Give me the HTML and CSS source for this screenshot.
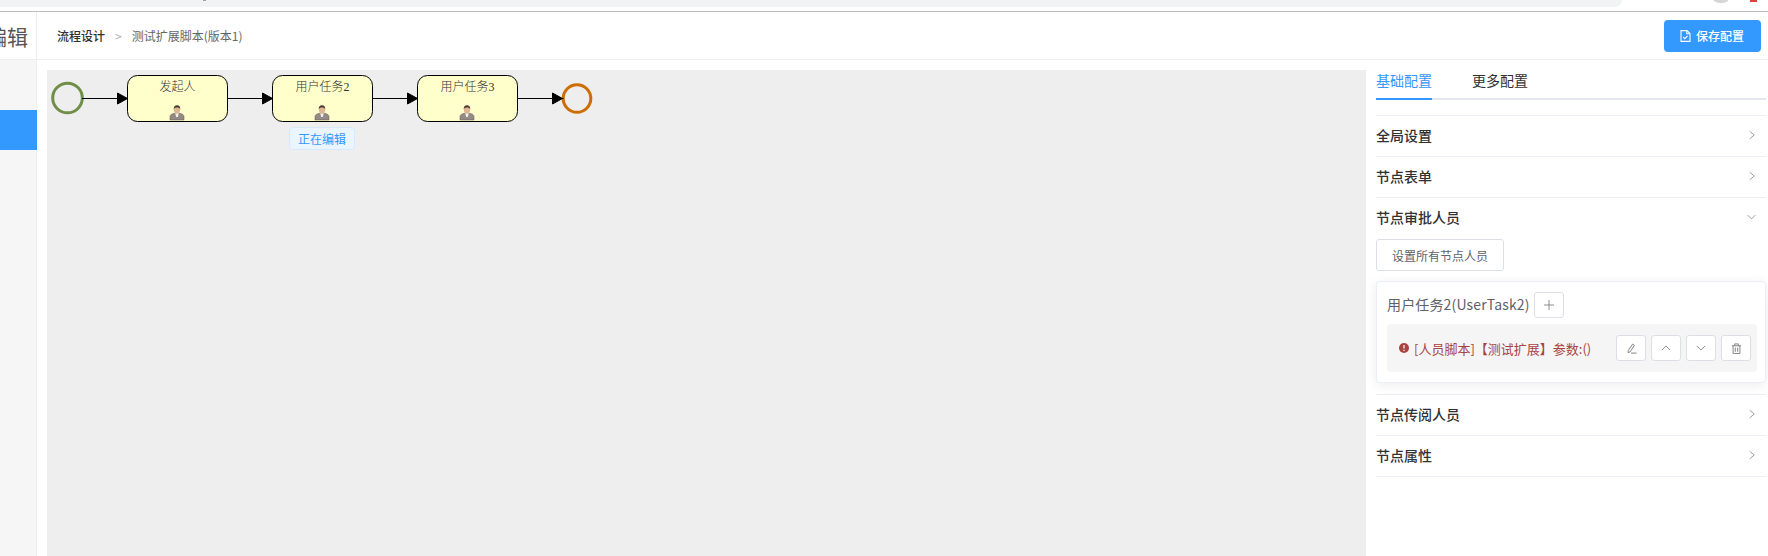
FILE: index.html
```html
<!DOCTYPE html>
<html lang="zh-CN">
<head>
<meta charset="utf-8">
<title>流程设计</title>
<link rel="stylesheet" href="styles.css">
</head>
<body>
<div class="chrome">
  <div class="address"></div>
  <span class="chrome-tick"></span>
  <span class="chrome-avatar"></span>
  <span class="chrome-dot"></span>
</div>
<div class="app">
  <aside class="sidebar">
    <div class="brand"><span class="brand-text">编辑</span></div>
    <div class="menu"><div class="menu-active"></div></div>
  </aside>
  <main class="main">
    <header class="topbar">
      <nav class="crumbs">
        <span class="crumb-root">流程设计</span>
        <span class="crumb-sep">&gt;</span>
        <span class="crumb-leaf">测试扩展脚本(版本1)</span>
      </nav>
      <button class="save-btn">
        <svg class="save-icon" viewBox="0 0 11 12" width="11" height="12" fill="none" stroke="#fff" stroke-width="1.1"><path d="M1 .6h6l3 3v7.8H1z"/><path d="M6.8.8v3h3"/><path d="M3.2 7l1.6 1.6L7.6 5.8"/></svg>
        <span>保存配置</span>
      </button>
    </header>
    <div class="content">
      <section class="canvas">
        <svg class="diagram" width="560" height="90" viewBox="0 0 560 90">
          <defs>
            <g id="person">
              <path d="M0 15v-3.4c0-1.8 1.6-2.6 4.6-3.4h4.8c3 .8 4.6 1.6 4.6 3.4V15z" fill="#948b86" stroke="#5f5650" stroke-width=".5"/>
              <path d="M5.2 8.2h3.6L7.8 12H6.2z" fill="#f4f1ea"/>
              <ellipse cx="7" cy="4.8" rx="3.1" ry="3.6" fill="#dfb592"/>
              <path d="M3.7 4.6C3.5 1.6 5 .2 7 .2s3.5 1.4 3.3 4.4C9.8 3 8.6 2.6 7 2.6s-2.8.4-3.3 2z" fill="#4b3a32"/>
            </g>
          </defs>
          <circle cx="20.5" cy="28" r="14.8" fill="none" stroke="#6f8f48" stroke-width="3"/>
          <circle cx="530" cy="28.5" r="13.8" fill="none" stroke="#cc6f00" stroke-width="3"/>
          <g stroke="#000" stroke-width="1" fill="#000">
            <path d="M35 28.5h45"/><path d="M70.500 23l10 5.500-10 5.500z"/>
            <path d="M180.500 28.500h45"/><path d="M215.500 23l10 5.500-10 5.500z"/>
            <path d="M325.500 28.500h45"/><path d="M360.500 23l10 5.500-10 5.500z"/>
            <path d="M470.500 28.500h46"/><path d="M505.500 23l10 5.500-10 5.500z"/>
          </g>
          <g fill="#ffffcc" stroke="#000" stroke-width="1">
            <rect x="80.500" y="5.500" width="100" height="46" rx="10"/>
            <rect x="225.500" y="5.500" width="100" height="46" rx="10"/>
            <rect x="370.500" y="5.500" width="100" height="46" rx="10"/>
          </g>
          <g class="node-label" text-anchor="middle">
            <text x="130.500" y="21">发起人</text>
            <text x="275.500" y="21">用户任务2</text>
            <text x="420.500" y="21">用户任务3</text>
          </g>
          <use href="#person" x="123" y="35"/>
          <use href="#person" x="268" y="35"/>
          <use href="#person" x="413" y="35"/>
        </svg>
        <span class="edit-badge">正在编辑</span>
      </section>
      <aside class="panel">
        <div class="tabs">
          <span class="tab tab-active">基础配置</span>
          <span class="tab">更多配置</span>
        </div>
        <div class="collapse">
          <div class="item">
            <div class="item-head"><span>全局设置</span><svg class="chev" viewBox="0 0 8 12" width="6" height="10"><path d="M1 1l6 5-6 5"/></svg></div>
          </div>
          <div class="item">
            <div class="item-head"><span>节点表单</span><svg class="chev" viewBox="0 0 8 12" width="6" height="10"><path d="M1 1l6 5-6 5"/></svg></div>
          </div>
          <div class="item">
            <div class="item-head"><span>节点审批人员</span><svg class="chev-down" viewBox="0 0 12 8" width="9" height="6"><path d="M1 1.500l5 5 5-5"/></svg></div>
            <div class="item-body">
              <button class="btn-all">设置所有节点人员</button>
              <div class="card">
                <div class="card-title">
                  <span class="card-name">用户任务2(UserTask2)</span>
                  <button class="icon-btn"><svg viewBox="0 0 12 12" width="10" height="10"><path d="M6 0v12M0 6h12"/></svg></button>
                </div>
                <div class="rule">
                  <div class="rule-text">
                    <svg class="alert" viewBox="0 0 10 10" width="10" height="10"><circle cx="5" cy="5" r="5" fill="#a94442"/><path d="M5 2v3.600M5 6.800v1.200" stroke="#fff" stroke-width="1.200"/></svg>
                    <span>[人员脚本]【测试扩展】参数:()</span>
                  </div>
                  <div class="rule-actions">
                    <button class="icon-btn"><svg viewBox="0 0 12 12" width="11" height="11"><path d="M2.500 8.200L7.200 1.200l2 1.300L4.600 9.600l-2.300.9zM5.500 11h6"/></svg></button>
                    <button class="icon-btn"><svg viewBox="0 0 12 12" width="10" height="10"><path d="M1 8.500l5-5 5 5"/></svg></button>
                    <button class="icon-btn"><svg viewBox="0 0 12 12" width="10" height="10"><path d="M1 3.500l5 5 5-5"/></svg></button>
                    <button class="icon-btn"><svg viewBox="0 0 12 12" width="11" height="11"><path d="M1 3h10M4 3V1h4v2M2.300 3v8.400h7.400V3M4.700 5v4.600M7.300 5v4.600"/></svg></button>
                  </div>
                </div>
              </div>
            </div>
          </div>
          <div class="item">
            <div class="item-head"><span>节点传阅人员</span><svg class="chev" viewBox="0 0 8 12" width="6" height="10"><path d="M1 1l6 5-6 5"/></svg></div>
          </div>
          <div class="item">
            <div class="item-head"><span>节点属性</span><svg class="chev" viewBox="0 0 8 12" width="6" height="10"><path d="M1 1l6 5-6 5"/></svg></div>
          </div>
        </div>
      </aside>
    </div>
  </main>
</div>
</body>
</html>
```
FILE: styles.css
```css
* { box-sizing: border-box; }
html, body { height: 100%; }
body {
  margin: 0;
  overflow: hidden;
  display: flex;
  flex-direction: column;
  background: #fff;
  color: #303133;
  font-family: "Noto Sans CJK SC", "Noto Sans", sans-serif;
  font-size: 14px;
}
button { font-family: inherit; cursor: pointer; }

.chrome {
  position: relative;
  flex: none;
  height: 12px;
  border-bottom: 1px solid #bdbdbd;
}
.address {
  width: 1622px;
  height: 7px;
  background: #f1f3f4;
  border-bottom-right-radius: 8px;
}
.chrome-tick { position: absolute; left: 203px; top: 0; width: 3px; height: 1px; background: #9aa0a6; }
.chrome-avatar { position: absolute; left: 1713px; top: -6px; width: 16px; height: 9px; border-radius: 50%; background: #d5d5d5; }
.chrome-dot { position: absolute; left: 1750px; top: 0; width: 7px; height: 2px; background: #d9453c; }

.app { flex: 1; display: flex; min-height: 0; }

.sidebar {
  flex: none;
  width: 37px;
  display: flex;
  flex-direction: column;
  overflow: hidden;
}
.brand {
  flex: none;
  height: 48px;
  display: flex;
  justify-content: flex-end;
  align-items: center;
  padding: 1px 8px 0 0;
  border-right: 1px solid #eeeeee;
  border-bottom: 1px solid #eeeeee;
  overflow: hidden;
}
.brand-text { flex: none; font-size: 21px; color: #555; white-space: nowrap; }
.menu { flex: 1; background: #f6f6f6; padding-top: 50px; border-right: 1px solid #eeeeee; }
.menu-active { height: 40px; margin-right: -1px; background: #3399ff; }

.main { flex: 1; min-width: 0; display: flex; flex-direction: column; }

.topbar {
  flex: none;
  height: 48px;
  display: flex;
  align-items: center;
  justify-content: space-between;
  padding: 0 7px 0 20px;
  border-bottom: 1px solid #eeeeee;
}
.crumbs { display: flex; align-items: center; font-size: 12px; }
.crumb-root { font-weight: 500; color: #303133; }
.crumb-sep { margin: 0 10px; color: #b4b4b4; }
.crumb-leaf { color: #666; }

.save-btn {
  display: flex;
  align-items: center;
  gap: 5px;
  width: 97px;
  height: 32px;
  padding: 0 0 0 16px;
  border: 0;
  border-radius: 4px;
  background: #3399ff;
  color: #fff;
  font-size: 12px;
  font-weight: 500;
}
.save-icon { flex: none; }

.content { flex: 1; min-height: 0; display: flex; padding: 10px 2px 0 10px; gap: 10px; }

.canvas { position: relative; flex: 1; min-width: 0; background: #eeeeee; overflow: hidden; }
.diagram { position: absolute; left: 0; top: 0; display: block; }
.node-label { font-size: 12px; fill: #333; font-weight: 300; font-family: "Liberation Serif", "Noto Sans CJK SC", serif; }
.edit-badge {
  position: absolute;
  left: 242px;
  top: 57px;
  width: 66px;
  height: 23px;
  display: flex;
  align-items: center;
  justify-content: center;
  border: 1px solid #d6eaff;
  border-radius: 4px;
  background: #ebf5ff;
  color: #3399ff;
  font-size: 12px;
}

.panel { flex: none; width: 390px; }

.tabs { display: flex; gap: 40px; height: 30px; border-bottom: 2px solid #e4e7ed; margin-bottom: 15px; }
.tab { position: relative; font-size: 14px; line-height: 20px; color: #303133; }
.tab-active { color: #3399ff; }
.tab-active::after { content: ""; position: absolute; left: 0; right: 0; bottom: -2px; height: 2px; background: #3399ff; }

.collapse { border-top: 1px solid #ebeef5; }
.item { border-bottom: 1px solid #ebeef5; }
.item-head {
  height: 40px;
  display: flex;
  align-items: center;
  justify-content: space-between;
  padding: 0 11px 2px 0;
  font-size: 14px;
  font-weight: 500;
  color: #303133;
}
.chev path, .chev-down path { fill: none; stroke: #909399; stroke-width: 1.2; }
.chev-down { margin-right: -1px; }

.item-body { padding: 1px 0 11px; }
.btn-all {
  display: block;
  width: 128px;
  height: 32px;
  padding: 0;
  border: 1px solid #dcdfe6;
  border-radius: 3px;
  background: #fff;
  color: #606266;
  font-size: 12px;
}
.card {
  margin-top: 10px;
  height: 102px;
  padding: 10px 8px 10px 10px;
  border: 1px solid #ebeef5;
  border-radius: 4px;
  background: #fff;
  box-shadow: 0 2px 12px rgba(0, 0, 0, .08);
}
.card-title { display: flex; align-items: center; gap: 4px; height: 26px; font-size: 14px; color: #606266; }
.card-name { letter-spacing: .15px; padding-bottom: 3px; }
.icon-btn {
  flex: none;
  width: 30px;
  height: 26px;
  padding: 0;
  display: flex;
  align-items: center;
  justify-content: center;
  border: 1px solid #dcdfe6;
  border-radius: 3px;
  background: #fff;
}
.icon-btn path { fill: none; stroke: #7a7a7a; stroke-width: 1; }
.rule {
  margin-top: 6px;
  height: 48px;
  display: flex;
  align-items: center;
  justify-content: space-between;
  padding: 0 6px 0 12px;
  border-radius: 4px;
  background: #f5f5f5;
}
.rule-text { display: flex; align-items: center; gap: 5px; font-size: 13px; color: #a94442; }
.alert { flex: none; }
.rule-actions { display: flex; gap: 5px; }
```
